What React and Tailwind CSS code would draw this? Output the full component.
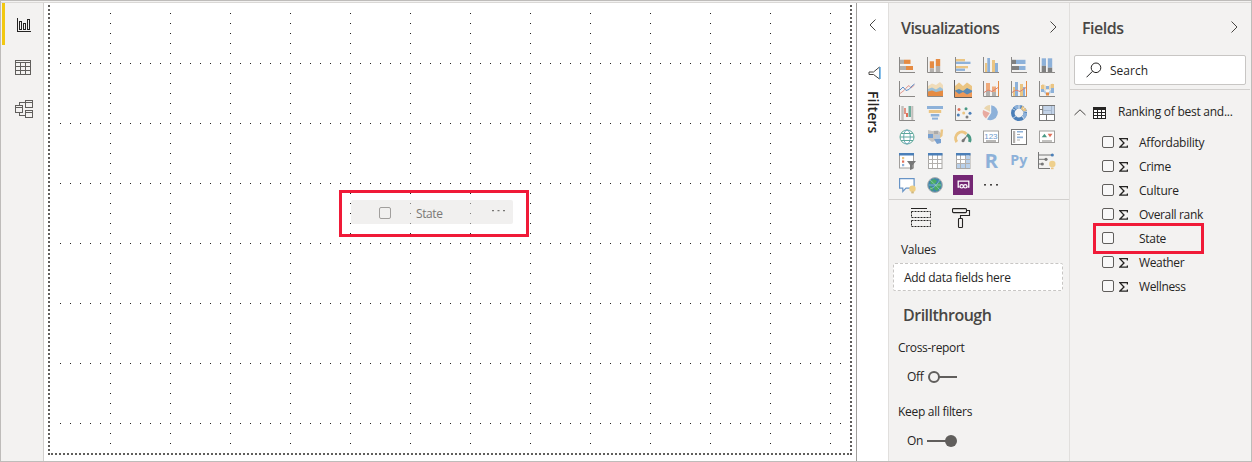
import React from 'react';

const AXIS = <path d="M.5 0V15.5H16" fill="none" stroke="#8a8886" />;
const O = '#e58b43', G = '#b3b0ad', B = '#8db1d9', Y = '#ebc583', D = '#7f7f7f', R = '#e0705a', T = '#4a9985', S = '#4b7fb8';

const R4 = ({ items }) => items.map(([x, y, w, h, c], i) => <rect key={i} x={x} y={y} width={w} height={h} fill={c} />);

const visuals = [
  { name: 'Stacked bar chart', art: <>{AXIS}<R4 items={[[1, 2.7, 4, 4.2, G], [5, 2.7, 6.5, 4.2, O], [1, 9, 6, 4, G], [7, 9, 7, 4, O]]} /></> },
  { name: 'Stacked column chart', art: <><R4 items={[[2.8, 4.3, 4.2, 7, O], [2.8, 11.3, 4.2, 4, G], [8.8, 2, 4.4, 7, O], [8.8, 9, 4.4, 6, G]]} />{AXIS}</> },
  { name: 'Clustered bar chart', art: <>{AXIS}<R4 items={[[1, 2, 9, 2.4, Y], [1, 4.7, 14.5, 2.3, B], [1, 9, 12, 2.3, Y], [1, 11.6, 9, 2.3, B]]} /></> },
  { name: 'Clustered column chart', art: <><R4 items={[[2, 6, 2.3, 9, Y], [4.3, 1, 2.7, 14, B], [9, 3, 3, 12, Y], [12, 6, 3, 9, B]]} />{AXIS}</> },
  { name: '100% stacked bar chart', art: <>{AXIS}<R4 items={[[1, 2.8, 4, 4.2, D], [5, 2.8, 9.5, 4.2, B], [1, 9, 7, 4, D], [8, 9, 6.5, 4, B]]} /></> },
  { name: '100% stacked column chart', art: <><R4 items={[[2.7, 1.3, 4.3, 7.5, B], [2.7, 8.8, 4.3, 6.2, D], [8.8, 1.3, 4.4, 9.4, B], [8.8, 10.7, 4.4, 4.3, D]]} />{AXIS}</> },

  { name: 'Line chart', art: <>{AXIS}<path d="M1 12.5 5 9.5 8 6 10 4.5 12 7 15.5 4" fill="none" stroke="#e59a90" /><path d="M1 9 4 6 7 9.5 10 8.5 13 5 15.5 3" fill="none" stroke="#5e8fc9" /></> },
  { name: 'Area chart', art: <><path d="M1 5 5 2.5 9 4 13 1 16 4V10H1z" fill="#f0dcb9" /><path d="M1 8 5 6.5 9 8.5 13 6 16 8V13H1z" fill="#9cc0d8" /><path d="M1 10.5 5 9.5 9 11 16 9.5V15H1z" fill={O} />{AXIS}</> },
  { name: 'Stacked area chart', art: <><path d="M0 5 4 1.5 8 5 12 1.5 17 5V12H0z" fill={Y} /><path d="M0 9.5 4 8 8 10 12 7 17 9.5V14H0z" fill="#5b8bb5" /><path d="M0 10 4 13 8 11 12 13.5 17 11V16H0z" fill="#ef9a58" /><path d="M-.5-1V16.5H17" fill="none" stroke="#605e5c" /></> },
  { name: 'Line and stacked column chart', art: <><R4 items={[[3, 2, 4, 8, '#efaa7b'], [3, 10, 4, 5, G], [9, 5.5, 4, 6, '#efaa7b'], [9, 11, 4, 4, G]]} />{AXIS}<path d="M15.5 0V15" stroke={O} /><path d="M1 11.5 5 9 9 10.5 15 6.5" fill="none" stroke="#dd806f" /></> },
  { name: 'Line and clustered column chart', art: <><R4 items={[[2, 6, 2, 9, Y], [4, 1, 3, 14, B], [9, 3, 3, 12, Y], [12, 6, 2, 9, B]]} />{AXIS}<path d="M15.5 0V15" stroke={O} /><path d="M1 11.5 5 9 9 10.5 15 6.5" fill="none" stroke="#dd806f" /></> },
  { name: 'Ribbon chart', art: <><path d="M3 5C6 5 6 8 8.5 8S11 4.5 14 4.5" fill="none" stroke="#eddbb9" strokeWidth="4" /><path d="M3 9C6 9 6 13 8.5 13S11 9 14 9" fill="none" stroke="#b5cbe4" strokeWidth="2" /><R4 items={[[2, 4, 3, 4, Y], [2, 8, 3, 3, B], [7, 5, 3, 3.5, B], [7, 8.5, 3, 3, '#f8f8f8'], [7, 11.5, 3, 3, O], [12, 3, 3, 4, Y], [12, 7, 3, 5, B]]} />{AXIS}</> },

  { name: 'Waterfall chart', art: <><R4 items={[[2.3, 1, 2.4, 14, '#c0bebb'], [5, 3, 2, 6, '#e29484'], [7, 8, 2, 4, R], [9.5, 1, 2.5, 11, '#6fac9c'], [12.3, 1, 2, 14, '#c0bebb']]} />{AXIS}</> },
  { name: 'Funnel', art: <R4 items={[[0, 1, 16, 3, B], [1.8, 5, 12.4, 3, Y], [3.8, 9, 8.5, 2.5, B], [5, 12.6, 6, 2, B]]} /> },
  { name: 'Scatter chart', art: <>{AXIS}{[[4, 4.5, R], [11, 3.7, T], [8.7, 8, Y], [15, 8.3, S], [3.3, 10, S], [12, 12, D]].map(([x, y, c], i) => <circle key={i} cx={x} cy={y} r="1.5" fill={c} />)}</> },
  { name: 'Pie chart', art: <><path d="M8.2.2A7.5 7.5 0 1 1 4 14.4L8.2 8z" fill={B} /><path d="M7 0V6.7L1 3.6A7.5 7.5 0 0 1 7 0z" fill="#ead6ae" /><path d="M0 5 6.8 8 3 13.5A8 8 0 0 1 0 5z" fill="#e8aaa0" /></> },
  { name: 'Donut chart', art: <g fill="none" strokeWidth="3.6"><circle cx="8" cy="8" r="6.2" stroke={S} /><path d="M4 3.3A6.2 6.2 0 0 1 9.5 2" stroke={B} /><path d="M10.5 2.3A6.2 6.2 0 0 1 14 6" stroke={Y} /><path d="M14.2 8A6.2 6.2 0 0 1 11.8 12.8" stroke={B} /><path d="M8 0V4M12 4l3-3M12 7.2l5-1M11 11l3 4M5 11l-4 3M4 5 0 3" stroke="#f3f2f1" strokeWidth=".7" /></g> },
  { name: 'Treemap', art: <g stroke="#777"><rect x=".5" y=".5" width="15" height="15" fill="#fff" /><path d="M4 1h11.5v8H4z" fill="#c3d3e8" stroke="none" /><path d="M.5 4.5h3.5M.5 9.5h15M3.7 1v8.5M7.5 9.5v6" fill="none" /><path d="M12.5 1v8M4 5.5h8" stroke="#a6b8ce" /></g> },

  { name: 'Map', art: <g fill="none" stroke="#5da79a"><circle cx="8" cy="8" r="7" fill="#fff" /><ellipse cx="8" cy="8" rx="3.3" ry="7" stroke="#6aa4bd" /><path d="M1 8h14M2 4.5h12M2 11.5h12" /></g> },
  { name: 'Filled map', art: <><path d="M1 1 5 2 11 1.5 13 3 15 6 13 9 14 13 11 14 8 12 5 13 1 10z" fill="#c9c6c2" /><path d="M1 5h5v4H1zM7 10h7v4l-4 1z" fill="#78a0d0" /><path d="M8 6h5v4H9z" fill="#b7c8dc" /><path d="M7 2h4v3H7z" fill="#aaa" /><path d="M13.7.5h2.4L15.5 7 13 9z" fill={Y} /></> },
  { name: 'Gauge', art: <><path d="M1.8 13A6.3 6.3 0 0 1 11.5 5" fill="none" stroke={Y} strokeWidth="3" /><path d="M12 5.5A6.3 6.3 0 0 1 14.5 13" fill="none" stroke={T} strokeWidth="3" /><path d="M7 11 13 5.5 9 12.5z" fill="#777" /><circle cx="8" cy="11.8" r="1.5" fill="#777" /></> },
  { name: 'Card', art: <><rect x=".5" y="2" width="15" height="11.5" fill="#fff" stroke="#a19f9d" /><path d="M3 12h10" stroke="#a19f9d" strokeWidth="1.5" /><text x="1.2" y="10" fontFamily="Liberation Sans, sans-serif" fontSize="8" fill="#6c99cc">123</text></> },
  { name: 'Multi-row card', art: <><rect x=".5" y=".5" width="15" height="15" fill="#fff" stroke="#777" /><R4 items={[[2, 2, 2.2, 12, G], [6, 2, 6, 1.5, B], [6, 5, 3, 1, G], [6, 7.5, 6, 1.7, B], [6, 10.5, 3, 1, G]]} /></> },
  { name: 'KPI', art: <><rect x=".5" y="2" width="15" height="11.5" fill="#fff" stroke="#a19f9d" /><path d="M3 12h10" stroke="#a19f9d" strokeWidth="1.3" /><path d="M2.7 8.2 5.5 4.8 8 8.2z" fill={T} /><path d="M8.7 4.8h4.8L11 8.2z" fill={R} /></> },

  { name: 'Slicer', art: <><rect x=".5" y=".5" width="14" height="14.5" fill="#fff" stroke="#a19f9d" /><path d="M0 0h15v2.5H0z" fill={S} /><R4 items={[[3, 4, 2.2, 2.2, Y], [3, 7.5, 2.2, 2.2, R], [3, 11, 2.2, 2.2, B]]} /><path d="M8 8h9L13.8 12v4L11 17v-5z" fill="#777" /></> },
  { name: 'Table', art: <><rect x="1.5" y="1" width="13.5" height="14.5" fill="#fff" stroke="#a9a7a5" /><path d="M5.5 2v13M10.5 2v13M1 6.5h14M1 10.5h14" stroke="#b3b0ad" /><path d="M1 0h14.5v2.5H1z" fill={S} /></> },
  { name: 'Matrix', art: <><rect x="1.5" y="1" width="13.5" height="14.5" fill="#fff" stroke="#a9a7a5" /><path d="M10.5 3h4.5v12H2v-4h8.5z" fill="#b9d0ea" /><path d="M5.5 2v13M10.5 2v13M1 6.5h14M1 10.5h14" stroke="#b3b0ad" /><path d="M1 0h14.5v2.5H1z" fill={S} /></> },
  { name: 'R script visual', art: <text x="1.5" y="15.2" fontFamily="Open Sans, sans-serif" fontWeight="700" fontSize="20" textLength="13.5" lengthAdjust="spacingAndGlyphs" fill={B}>R</text> },
  { name: 'Python visual', art: <text x="-.7" y="12.4" fontFamily="Open Sans, sans-serif" fontWeight="700" fontSize="14.5" textLength="17" lengthAdjust="spacingAndGlyphs" fill={B}>Py</text> },
  { name: 'Key influencers', art: <><path d="M-.5-1V15.5H11M0 2H13M0 6.3H6M0 11H4" fill="none" stroke="#777" /><circle cx="13.3" cy="2" r="1.6" fill={S} /><circle cx="7" cy="6.3" r="1.6" fill="#777" /><circle cx="3.3" cy="11" r="1.6" fill="#777" /><circle cx="13.3" cy="11" r="3.2" fill="#efd08d" /><path d="M12 14.5h2.6v1.7H12z" fill={Y} /></> },

  { name: 'Q&A', art: <><path d="M.6 1.6h14.5v9.6H7L3.8 14.5V11.2H.6z" fill="#fff" stroke="#6894c6" strokeWidth="1.2" /><circle cx="13.5" cy="11.8" r="3.2" fill="#efcf85" /><path d="M12.3 14.5h2.5v1.9h-2.5z" fill="#cfb77d" /></> },
  { name: 'ArcGIS map', art: <><circle cx="8" cy="8" r="7.4" fill="#3f86a8" stroke="#b0b0b0" /><path d="M3 4 7 2 10 4 8 7 4 7zM8 8l5-3 1 4-4 5-3-2zM3 9l3 2v3L3 12z" fill="#4bab62" /><path d="M1.5 8h13M3 3c4 3 7 7 10 10M3 12c4-1 8-5 9.500-9" fill="none" stroke="#a9d4e0" strokeWidth=".6" /></> },
  { name: 'Power Apps', art: <><rect x="-2" y="-2" width="20" height="20" fill="#742774" /><path d="M4.500 10H3.200V4.200h10.600V10H12.500" fill="none" stroke="#fff" strokeWidth="1.300" /><g fill="none" stroke="#fff" strokeWidth="1.200"><circle cx="6.700" cy="9.300" r="1.700" /><circle cx="10.300" cy="9.300" r="1.700" /></g></> },
  { name: 'More visuals', art: <R4 items={[[1, 7, 2, 1.6, '#484644'], [7, 7, 2, 1.6, '#484644'], [13, 7, 2, 1.6, '#484644']]} /> },
];

const fields = [
  ['Affordability', true, 'tracking-[-0.25px]'], ['Crime', true, 'tracking-[-0.3px]'], ['Culture', true, 'tracking-[-0.2px]'], ['Overall rank', true, 'tracking-[-0.35px]'],
  ['State', false, 'tracking-[-0.3px]'], ['Weather', true, 'tracking-[-0.35px]'], ['Wellness', true, 'tracking-[-0.35px]'],
];

const rows = [63, 123, 183, 243, 303, 363, 423];
const cols = [110, 170, 230, 290, 350, 410, 470, 530, 590, 650, 710, 770, 830];

function Chevron({ d, className, w = 8, h = 12 }) {
  return <svg width={w} height={h} viewBox={`0 0 ${w} ${h}`} className={className}><path d={d} fill="none" stroke="#484644" /></svg>;
}

function Sidebar() {
  return (
    <nav className="flex w-[42px] shrink-0 border-r border-[#d2d0ce] bg-[#f3f2f1]">
      <span className="h-[42px] w-[3px] bg-[#f2c811]" />
      <div className="flex flex-col pl-[10px]">
        <svg width="20" height="16" className="mt-[15px]" fill="none" stroke="#252423" shapeRendering="crispEdges"><path d="M2.5 0V13.5H16M4.5 3.5h2v8h-2zM8.5 5.5h2v6h-2zM12.5 1.5h2v10h-2z" /></svg>
        <svg width="20" height="16" className="mt-[26px]" fill="none" stroke="#605e5c" shapeRendering="crispEdges"><path d="M.5.5h15v14H.5zM0 2.5h16M0 6.5h16M0 10.5h16M5.5 2v13M10.5 2v13" /></svg>
        <svg width="20" height="20" className="mt-[24px]" fill="none" stroke="#605e5c" shapeRendering="crispEdges"><path d="M.5 5.5h7v7h-7zM0 7.5h8M10.5.5h7v7h-7zM10 2.5h8M10.5 10.5h7v7h-7zM10 12.5h8M4.500 5V2.500H10M4.500 13v2.500H10" /></svg>
      </div>
    </nav>
  );
}

function Canvas() {
  return (
    <main className="relative w-[813px] shrink-0 border-r border-[#a19f9d] bg-white">
      <svg width="812" height="458" viewBox="44 3 812 458" shapeRendering="crispEdges" fill="none">
        <path d="M49 5V455M851 5V455" stroke="#605e5c" strokeWidth="2" strokeDasharray="2 2" />
        <path d="M51 454H850" stroke="#605e5c" strokeWidth="2" strokeDasharray="2 2" />
        {rows.map((y) => <path key={y} d={`M60 ${y + 0.5}H842`} stroke="#252423" strokeDasharray="1 9" />)}
        {cols.map((x) => <path key={x} d={`M${x + 0.5} 13V444`} stroke="#252423" strokeDasharray="1 9" />)}
      </svg>
      <div className="absolute left-[307px] top-[197px] flex h-[24px] w-[162px] items-center rounded-[2px] bg-[#e3e1df]/50 pl-[28px] text-[#605e5c]">
        <span className="mt-[2px] h-[12px] w-[12px] rounded-[2px] border border-[#a19f9d]" />
        <span className="ml-[25px] mt-[4px] w-[76px] text-[12px] tracking-[-0.4px] text-[#7a7876]">State</span>
        <svg width="14" height="3" className="-mt-[2px]"><path d="M0 0h2v1.300H0zM5.500 0h2v1.300h-2zM11 0h2v1.300h-2z" fill="#797775" /></svg>
      </div>
      <div className="absolute left-[295px] top-[187px] h-[47px] w-[190px] border-3 border-[#f01a38]" />
    </main>
  );
}

function FiltersPane() {
  return (
    <aside className="flex w-[32px] shrink-0 flex-col items-center border-r border-[#e1dfdd] bg-white">
      <Chevron d="M6.5.5 1 6 6.5 11.5" className="mt-[16px]" />
      <svg width="14" height="14" className="mt-[35px] ml-[5px]" fill="none"><path d="M11.5 1 5.5 6H1V8.500H5.500L11.500 13z" stroke="#484644" /><path d="M12 1V13" stroke="#69afe5" strokeWidth="1.600" /></svg>
      <span className="mt-[11px] ml-px text-[14px] font-semibold leading-[20px] tracking-[0.1px] text-[#252423] [writing-mode:vertical-rl]">Filters</span>
    </aside>
  );
}

function Visualizations() {
  return (
    <section className="flex w-[181px] shrink-0 flex-col border-r border-[#e1dfdd]">
      <header className="flex h-[48px] items-center justify-between pl-[12px] pr-[12px]">
        <h2 className="mt-px text-[16px] font-semibold tracking-[-0.55px] text-[#484644]">Visualizations</h2>
        <Chevron d="M1.500.5 7 6 1.500 11.500" />
      </header>
      <div className="grid h-[149px] shrink-0 grid-cols-[repeat(6,16px)] auto-rows-[16px] content-start gap-x-[12px] gap-y-[8px] border-b border-[#d2d0ce] pl-[10px] pt-[6px]">
        {visuals.map((v) => <svg key={v.name} aria-label={v.name} width="16" height="16" viewBox="0 0 16 16" className="overflow-visible">{v.art}</svg>)}
      </div>
      <div className="flex h-[40px] gap-[20px] pl-[22px] pt-[8px]">
        <svg width="21" height="20" fill="none" stroke="#252423"><path d="M0 .5H16" /><path d="M.5 3.500h19v6H.5zM.5 12.500h19v6H.5z" strokeDasharray="2 1" /></svg>
        <svg width="20" height="21" fill="none" stroke="#252423" strokeWidth="1.100"><rect x=".5" y=".6" width="14" height="4" rx="1" /><path d="M14.500 2.500h3v5h-9v3" /><rect x="6.500" y="10.500" width="4" height="9" rx=".7" /></svg>
      </div>
      <p className="ml-[12px] mt-[2px] text-[12px] leading-[16px] tracking-[-0.3px]">Values</p>
      <div className="ml-[4px] mt-[5px] flex h-[28px] w-[170px] shrink-0 items-center rounded-[2px] border border-dashed border-[#c8c6c4] bg-white pl-[10px] text-[12px]">
        <span className="mt-[2px] tracking-[-0.28px]">Add data fields here</span>
      </div>
      <h3 className="ml-[14px] mt-[13px] text-[16px] font-semibold leading-[22px] tracking-[-0.5px] text-[#484644]">Drillthrough</h3>
      <p className="ml-[9px] mt-[14px] text-[12px] leading-[16px] tracking-[-0.32px]">Cross-report</p>
      <div className="ml-[18px] mt-[13px] flex h-[16px] items-center text-[12px]">
        <span className="w-[20px] tracking-[-0.3px]">Off</span>
        <svg width="32" height="14" fill="none" stroke="#605e5c" strokeWidth="2"><circle cx="7" cy="7" r="5" /><path d="M12 7H30" /></svg>
      </div>
      <p className="ml-[9px] mt-[19px] text-[12px] leading-[16px] tracking-[-0.3px]">Keep all filters</p>
      <div className="ml-[18px] mt-[13px] flex h-[16px] items-center text-[12px]">
        <span className="w-[20px] tracking-[-0.3px]">On</span>
        <svg width="32" height="14" fill="#605e5c"><path d="M0 6H20V8H0z" /><circle cx="24" cy="7" r="6" /></svg>
      </div>
    </section>
  );
}

function Checkbox() {
  return <span className="h-[12px] w-[12px] rounded-[2px] border border-[#605e5c] bg-[#f8f8f8]" />;
}

function Fields() {
  return (
    <section className="relative flex w-[180px] shrink-0 flex-col">
      <header className="flex h-[48px] items-center justify-between pl-[12px] pr-[12px]">
        <h2 className="mt-px text-[16px] font-semibold tracking-[-0.5px] text-[#484644]">Fields</h2>
        <Chevron d="M1.500.5 7 6 1.500 11.500" />
      </header>
      <div className="border-b border-[#d2d0ce] pb-[4px] pl-[4px] pt-[4px]">
        <div className="flex h-[30px] w-[172px] items-center rounded-[2px] border border-[#c8c6c4] bg-white pl-[11px]">
          <svg width="16" height="16" fill="none" stroke="#252423"><circle cx="10" cy="5.800" r="4.800" /><path d="M6.500 9.300.5 15.300" /></svg>
          <span className="ml-[8px] mt-[2px] text-[12px]">Search</span>
        </div>
      </div>
      <div className="mt-[10px] flex h-[24px] items-center pl-[4px]">
        <Chevron d="M.5 6 6 .8 11.500 6" w={12} h={7} className="mt-px" />
        <svg width="13" height="12" className="ml-[7px] mt-px" shapeRendering="crispEdges"><path d="M0 0H13V12H0z" fill="#252423" /><path d="M1 3h3v2H1zM5 3h3v2H5zM9 3h3v2H9zM1 6h3v2H1zM5 6h3v2H5zM9 6h3v2H9zM1 9h3v2H1zM5 9h3v2H5zM9 9h3v2H9z" fill="#fff" /></svg>
        <span className="ml-[12px] whitespace-nowrap text-[12px] tracking-[-0.25px]">Ranking of best and...</span>
      </div>
      <ul className="mt-[6px]">
        {fields.map(([name, sum, tracking]) => (
          <li key={name} className="flex h-[24px] items-center pl-[32px] text-[12px]">
            <Checkbox />
            <span className="ml-[5px] mt-px flex w-[20px]">
              {sum && <svg width="9" height="10" fill="none" stroke="#252423" strokeWidth="1.300"><path d="M8.400 2.500V.7H.8L5 5 .8 9.200H8.400V7.400" /></svg>}
            </span>
            <span className={`mt-px ${tracking}`}>{name}</span>
          </li>
        ))}
      </ul>
      <div className="absolute left-[23px] top-[220px] h-[31px] w-[111px] border-3 border-[#f01a38]" />
    </section>
  );
}

export default function App() {
  return (
    <div className="h-[462px] w-[1252px] overflow-hidden border border-[#bebcba] bg-[#f3f2f1] font-['Open_Sans','Noto_Sans',sans-serif] text-[#252423]">
      <div className="h-[2px] border-b border-[#dad8d6]" />
      <div className="flex h-[458px] pl-px">
        <Sidebar />
        <Canvas />
        <FiltersPane />
        <Visualizations />
        <Fields />
      </div>
    </div>
  );
}
